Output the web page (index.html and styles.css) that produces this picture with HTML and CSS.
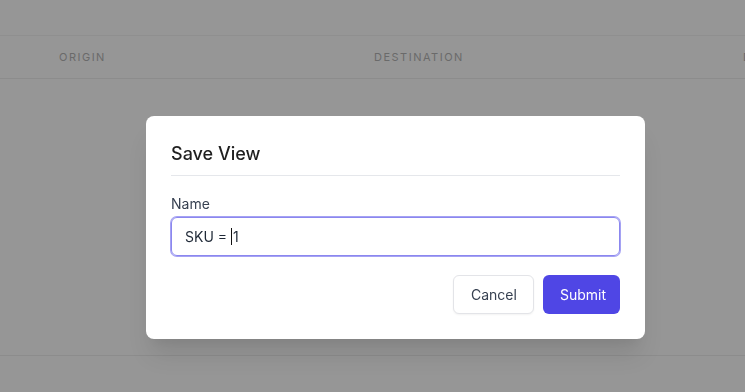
FILE: index.html
```html
<!DOCTYPE html>
<html lang="en">
<head>
  <meta charset="UTF-8">
  <title>Save View</title>
  <link rel="stylesheet" href="styles.css">
</head>
<body>
  <div class="page">
    <div class="table-head">
      <div class="col col-origin">Origin</div>
      <div class="col col-dest">Destination</div>
      <div class="col col-more">D</div>
    </div>
    <div class="table-body"></div>
    <div class="table-foot"></div>
  </div>

  <div class="overlay">
    <div class="modal">
      <h2 class="modal__title">Save View</h2>
      <label class="modal__label" for="name">Name</label>
      <div class="modal__input"><span>SKU = </span><span class="caret"></span><span>1</span></div>
      <div class="modal__actions">
        <button class="btn btn-cancel">Cancel</button>
        <button class="btn btn-submit">Submit</button>
      </div>
    </div>
  </div>
</body>
</html>
```

FILE: styles.css
```css
html, body {
  margin: 0;
  height: 100%;
}

body {
  background: #969696;
  font-family: "Inter", "Noto Sans", sans-serif;
  overflow: hidden;
}

.page {
  padding-top: 35px;
}

.table-head {
  display: flex;
  align-items: center;
  height: 42px;
  border-top: 1px solid #8f8f8f;
  border-bottom: 1px solid #8c8c8c;
  font-size: 11px;
  letter-spacing: 1.5px;
  text-transform: uppercase;
  color: #6a6a6a;
  white-space: nowrap;
}

.col-origin {
  padding-left: 59px;
  width: 374px;
  box-sizing: border-box;
  flex-shrink: 0;
}

.col-dest {
  width: 369px;
  flex-shrink: 0;
}

.table-body {
  height: 276px;
  border-bottom: 1px solid #8c8c8c;
}

.overlay {
  position: fixed;
  inset: 0;
  padding: 116px 0 0 146px;
}

.modal {
  width: 499px;
  box-sizing: border-box;
  background: #fff;
  border-radius: 8px;
  padding: 24px 25px 25px;
  box-shadow: 0 20px 25px -5px rgba(0, 0, 0, 0.1), 0 10px 10px -5px rgba(0, 0, 0, 0.04);
}

.modal__title {
  margin: 0;
  font-size: 18px;
  font-weight: 500;
  color: #1f1f1f;
  line-height: 28px;
  padding-bottom: 7px;
  border-bottom: 1px solid #e5e7eb;
}

.modal__label {
  display: block;
  margin-top: 18px;
  font-size: 14px;
  line-height: 20px;
  color: #374151;
}

.modal__input {
  margin-top: 3px;
  height: 39px;
  box-sizing: border-box;
  border: 1px solid #8b87ef;
  border-radius: 6px;
  box-shadow: 0 0 0 1px #a5a2f3;
  display: flex;
  align-items: center;
  padding-left: 13px;
  font-size: 14px;
  color: #1f2937;
}

.modal__input span {
  white-space: pre;
}

.caret {
  display: inline-block;
  width: 1px;
  height: 17px;
  background: #111;
  margin-right: 1px;
}

.modal__actions {
  display: flex;
  justify-content: flex-end;
  gap: 9px;
  margin-top: 19px;
}

.btn {
  height: 39px;
  border-radius: 6px;
  font-family: inherit;
  font-size: 14px;
  padding: 0 17px;
  cursor: pointer;
}

.btn-cancel {
  background: #fff;
  color: #374151;
  border: 1px solid #e3e4e8;
  box-shadow: 0 1px 2px rgba(0, 0, 0, 0.05);
  width: 81px;
}

.btn-submit {
  background: #4f46e5;
  color: #fff;
  border: 0;
  width: 77px;
}
```
